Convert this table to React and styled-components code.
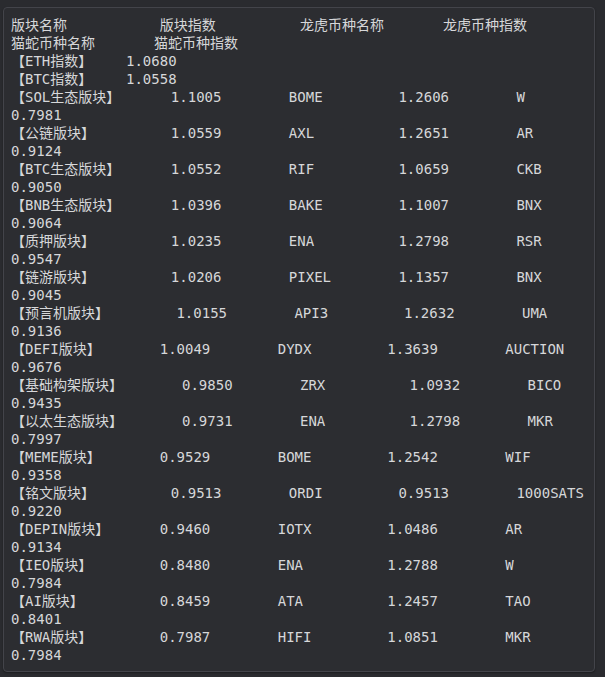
import React from 'react';
import styled, { createGlobalStyle } from 'styled-components';

const GlobalStyle = createGlobalStyle`
  html, body {
    margin: 0;
    padding: 0;
    background: #2a2b2f;
  }
`;

const Page = styled.div`
  padding: 7px 10px 6px 3px;
  min-height: 677px;
  box-sizing: border-box;
`;

const Panel = styled.div`
  background: #2c2d31;
  border: 1px solid #43444a;
  border-radius: 4px;
  padding: 8px 7px 7px 7px;
  box-shadow: 0 1px 2px rgba(0, 0, 0, 0.35);
`;

const Pre = styled.pre`
  margin: 0;
  font-family: "DejaVu Sans Mono", "Noto Sans CJK SC", monospace;
  font-size: 14px;
  line-height: 18px;
  color: #d6d7d9;
  white-space: pre;
  overflow: hidden;
`;

// pad by character count, like str.ljust (CJK counts as one char)
const pad = (s, n) => s + ' '.repeat(Math.max(0, n - [...s].length));

const header = [
  pad('版块名称', 15) + pad('版块指数', 14) + pad('龙虎币种名称', 13) + '龙虎币种指数',
  pad('猫蛇币种名称', 13) + '猫蛇币种指数',
];

const indexes = [
  ['【ETH指数】', '1.0680'],
  ['【BTC指数】', '1.0558'],
];

const sectors = [
  ['【SOL生态版块】', '1.1005', 'BOME', '1.2606', 'W', '0.7981'],
  ['【公链版块】', '1.0559', 'AXL', '1.2651', 'AR', '0.9124'],
  ['【BTC生态版块】', '1.0552', 'RIF', '1.0659', 'CKB', '0.9050'],
  ['【BNB生态版块】', '1.0396', 'BAKE', '1.1007', 'BNX', '0.9064'],
  ['【质押版块】', '1.0235', 'ENA', '1.2798', 'RSR', '0.9547'],
  ['【链游版块】', '1.0206', 'PIXEL', '1.1357', 'BNX', '0.9045'],
  ['【预言机版块】', '1.0155', 'API3', '1.2632', 'UMA', '0.9136'],
  ['【DEFI版块】', '1.0049', 'DYDX', '1.3639', 'AUCTION', '0.9676'],
  ['【基础构架版块】', '0.9850', 'ZRX', '1.0932', 'BICO', '0.9435'],
  ['【以太生态版块】', '0.9731', 'ENA', '1.2798', 'MKR', '0.7997'],
  ['【MEME版块】', '0.9529', 'BOME', '1.2542', 'WIF', '0.9358'],
  ['【铭文版块】', '0.9513', 'ORDI', '0.9513', '1000SATS', '0.9220'],
  ['【DEPIN版块】', '0.9460', 'IOTX', '1.0486', 'AR', '0.9134'],
  ['【IEO版块】', '0.8480', 'ENA', '1.2788', 'W', '0.7984'],
  ['【AI版块】', '0.8459', 'ATA', '1.2457', 'TAO', '0.8401'],
  ['【RWA版块】', '0.7987', 'HIFI', '1.0851', 'MKR', '0.7984'],
];

const lines = [
  ...header,
  ...indexes.map(([name, v]) => pad(name, 11) + v),
  ...sectors.flatMap(([name, v1, n2, v2, n3, v3]) => [
    pad(name, 15) + pad(v1, 14) + pad(n2, 13) + pad(v2, 14) + n3,
    v3,
  ]),
];

export default function App() {
  return (
    <>
      <GlobalStyle />
      <Page>
        <Panel>
          <Pre>{lines.join('\n')}</Pre>
        </Panel>
      </Page>
    </>
  );
}
